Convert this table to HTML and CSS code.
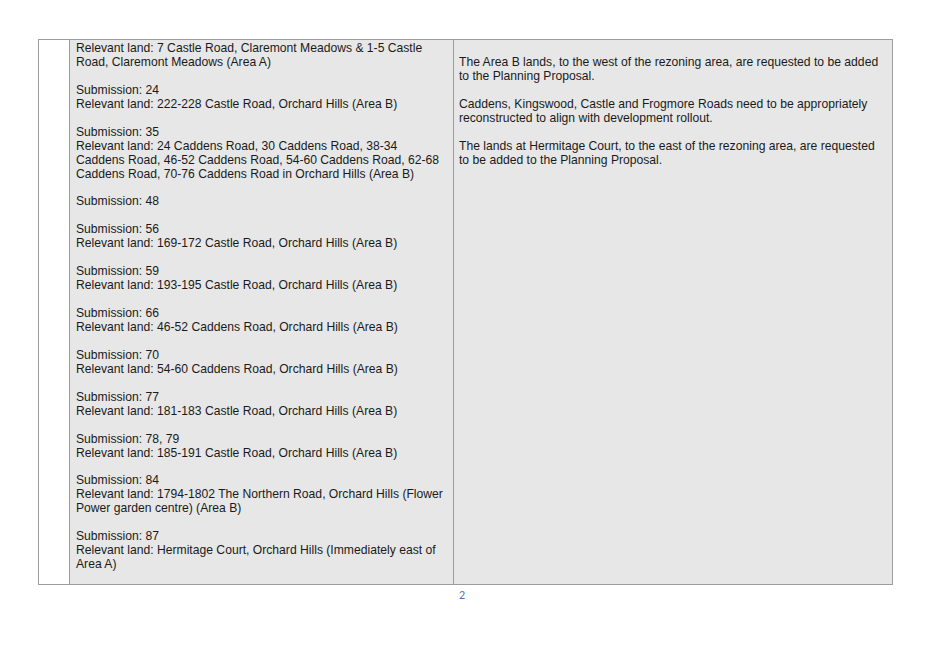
FILE: index.html
```html
<!DOCTYPE html>
<html>
<head>
<meta charset="utf-8">
<link rel="stylesheet" href="styles.css">
</head>
<body>
<div class="page">
  <div class="table">
    <div class="cell num"></div>
    <div class="cell land">
      <p>Relevant land: 7 Castle Road, Claremont Meadows &amp; 1-5 Castle Road, Claremont Meadows (Area A)</p>
      <p>Submission: 24<br>Relevant land: 222-228 Castle Road, Orchard Hills (Area B)</p>
      <p>Submission: 35<br>Relevant land: 24 Caddens Road, 30 Caddens Road, 38-34 Caddens Road, 46-52 Caddens Road, 54-60 Caddens Road, 62-68 Caddens Road, 70-76 Caddens Road in Orchard Hills (Area B)</p>
      <p>Submission: 48</p>
      <p>Submission: 56<br>Relevant land: 169-172 Castle Road, Orchard Hills (Area B)</p>
      <p>Submission: 59<br>Relevant land: 193-195 Castle Road, Orchard Hills (Area B)</p>
      <p>Submission: 66<br>Relevant land: 46-52 Caddens Road, Orchard Hills (Area B)</p>
      <p>Submission: 70<br>Relevant land: 54-60 Caddens Road, Orchard Hills (Area B)</p>
      <p>Submission: 77<br>Relevant land: 181-183 Castle Road, Orchard Hills (Area B)</p>
      <p>Submission: 78, 79<br>Relevant land: 185-191 Castle Road, Orchard Hills (Area B)</p>
      <p>Submission: 84<br>Relevant land: 1794-1802 The Northern Road, Orchard Hills (Flower Power garden centre) (Area B)</p>
      <p>Submission: 87<br>Relevant land: Hermitage Court, Orchard Hills (Immediately east of Area A)</p>
    </div>
    <div class="cell issues">
      <p>The Area B lands, to the west of the rezoning area, are requested to be added to the Planning Proposal.</p>
      <p>Caddens, Kingswood, Castle and Frogmore Roads need to be appropriately reconstructed to align with development rollout.</p>
      <p>The lands at Hermitage Court, to the east of the rezoning area, are requested to be added to the Planning Proposal.</p>
    </div>
  </div>
  <div class="pagenum">2</div>
</div>
</body>
</html>
```
FILE: styles.css
```css
html, body {
  margin: 0;
  padding: 0;
  background: #ffffff;
}
.page {
  width: 928px;
  height: 656px;
  padding-top: 39px;
  box-sizing: border-box;
}
.table {
  display: flex;
  margin-left: 38px;
  width: 855px;
  border: 1px solid #9c9c9c;
  box-sizing: border-box;
  font-family: "Liberation Sans", Arial, sans-serif;
  font-size: 12.15px;
  line-height: 13.95px;
  color: #1a1a1a;
}
.cell {
  box-sizing: border-box;
}
.num {
  width: 31px;
  border-right: 1px solid #9c9c9c;
  background: #ffffff;
}
.land {
  width: 384px;
  border-right: 1px solid #9c9c9c;
  background: #e7e7e7;
  padding: 2px 7px 12px 6px;
}
.issues {
  flex: 1;
  background: #e7e7e7;
  padding: 15.95px 8px 0 5px;
}
.cell p {
  margin: 0 0 13.95px 0;
}
.cell p:last-child {
  margin-bottom: 0;
}
.pagenum {
  text-align: center;
  margin-top: 3px;
  padding-right: 4px;
  font-family: Carlito, Calibri, "Liberation Sans", sans-serif;
  font-size: 12px;
  line-height: 14px;
  color: #4a74c0;
}
```
